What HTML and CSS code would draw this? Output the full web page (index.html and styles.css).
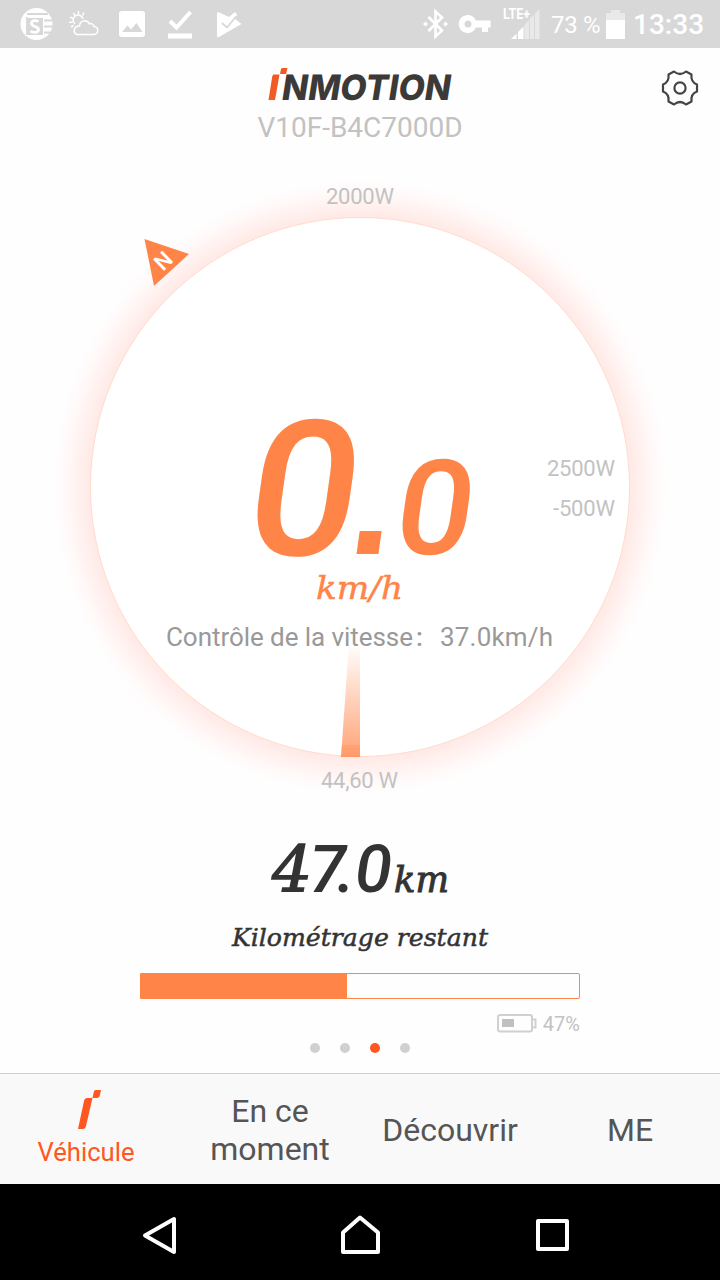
FILE: index.html
```
<!DOCTYPE html>
<html lang="fr">
<head>
  <meta charset="UTF-8" />
  <meta name="viewport" content="width=device-width, initial-scale=1.0">
  <title>InMotion – Véhicule</title>
  <link rel="stylesheet" href="styles.css">
</head>
<body>

  <!-- Status bar -->
  <div class="status-bar">
    <div class="status-icons">
      <svg width="34" height="34" viewBox="0 0 34 34">
        <circle cx="16.500" cy="17" r="16" fill="#fff" />
        <path d="M7 7H28M24 13.500H34M24 19.500H34M24 25.500H34M7 10V28" stroke="#d8d8d8" stroke-width="1.800" />
        <rect x="7" y="11" width="16" height="17" fill="#d8d8d8" />
        <path d="M18.500 14.500C16 13 11.500 13 11.500 16.500S18.500 19 18.500 22.500S13 26 10.500 24" fill="none" stroke="#fff" stroke-width="2.800" />
      </svg>
      <svg width="30" height="26" viewBox="0 0 30 26" fill="none" stroke="#fff" stroke-width="1.500">
        <path d="M8 23.500h16.500a4 4 0 0 0 .5-8c-.5-2.500-3-3.500-4.500-2.500c-2.500-5-9.500-4-10 2c-6 0-7 7-2.500 8.500z" />
        <path d="M6 13a5 5 0 1 1 8-5M9.500 0v3M4.500 2l1.500 3M1 6l3 1.500M0 11.500l3.500-.5M2 16l2.500-1.500M15 1.500l-1.500 3" />
      </svg>
      <svg width="26" height="26" viewBox="0 0 26 26">
        <rect width="26" height="26" rx="3" fill="#fff" />
        <path d="M3 21L8.500 14.500L12 18.500L17.500 12L23.500 21z" fill="#d8d8d8" />
      </svg>
      <svg width="25" height="29" viewBox="0 0 25 29">
        <path d="M2 11L8.500 17.500L22.500 2" fill="none" stroke="#fff" stroke-width="4" />
        <rect y="23.500" width="24" height="5" fill="#fff" />
      </svg>
      <svg width="25" height="27" viewBox="0 0 25 27">
        <path d="M1 1L12 6L18 1L20 3.500L18 8L24.500 13L1 26.500Q0 26 0 24V2z" fill="#fff" />
        <path d="M5 12L10 16.500L19 5.500" fill="none" stroke="#d8d8d8" stroke-width="1.800" />
      </svg>
    </div>
    <div class="status-info">
      <svg width="26" height="30" viewBox="0 0 26 30">
        <path d="M5.500 8L19 21.500L12.500 27.500V2.500L19 8.500L5.500 22" fill="none" stroke="#fff" stroke-width="2.600" />
        <path d="M2.500 12.500L5 15L2.500 17.500L0 15zM22.500 12.500L25 15L22.500 17.500L20 15z" fill="#fff" />
      </svg>
      <svg class="key" width="32" height="18" viewBox="0 0 32 18">
        <path d="M17 5.500H31.500V12.500H29V17H23V12.500H17A9 9 0 1 1 17 5.500zM9 5.500A3.500 3.500 0 1 0 9 12.500A3.500 3.500 0 1 0 9 5.500z" fill="#fff" fill-rule="evenodd" />
      </svg>
      <svg class="signal" width="37" height="32" viewBox="0 0 37 32">
        <path d="M20.500 17L25 12V31H20.500zM26 10.500L30 6.500V31H26zM31 5.500L35.500 1V31H31z" fill="#e9e9e9" />
        <path d="M7 31L12.500 25.500V31zM14 24L19.500 18.500V31H14z" fill="#fff" />
        <text x="-1" y="11" class="lte" textLength="27" lengthAdjust="spacingAndGlyphs">LTE+</text>
      </svg>
      <span class="percent">73 %</span>
      <svg class="battery" width="19" height="29" viewBox="0 0 19 29">
        <path d="M0 3H5V0H14V3H19V10H0z" fill="#e9e9e9" />
        <rect y="10" width="19" height="19" fill="#fff" />
      </svg>
      <span class="clock">13:33</span>
    </div>
  </div>

  <!-- Logo and vehicle name -->
  <header class="header">
    <svg class="logo" width="188" height="34" viewBox="0 0 188 34">
      <path d="M7.500 7.500H13.500L9 33H2.500L6 11Q6.500 7.500 7.500 7.500zM16 1H21.500L20 7H14L15 2z" fill="#f15a24" />
      <text transform="translate(14.500 33) skewX(-9)" class="logo-text" textLength="169" lengthAdjust="spacingAndGlyphs">NMOTION</text>
    </svg>
    <div class="vehicle-name">V10F-B4C7000D</div>
    <svg class="settings" width="40" height="40" viewBox="0 0 40 40" fill="none" stroke="#444" stroke-width="2.200">
      <path d="M14 3.500Q20 8.500 26 3.500L31.500 6.500Q30.500 14 37 16.500V23.500Q30.500 26 31.500 33.500L26 36.500Q20 31.500 14 36.500L8.500 33.500Q9.500 26 3 23.500V16.500Q9.500 14 8.500 6.500z" stroke-linejoin="round" />
      <circle cx="20" cy="20" r="5.600" />
    </svg>
  </header>

  <!-- Speed dial -->
  <svg class="dial" width="720" height="660" viewBox="0 150 720 660">
    <defs>
      <radialGradient id="glow" gradientUnits="userSpaceOnUse" cx="360" cy="487" r="308">
        <stop offset="0.875" stop-color="#ffe9e6" />
        <stop offset="0.920" stop-color="#fff2f0" />
        <stop offset="0.960" stop-color="#fffaf9" />
        <stop offset="1" stop-color="#fefefe" />
      </radialGradient>
      <linearGradient id="needle" x1="0" y1="0" x2="0" y2="1">
        <stop offset="0" stop-color="#ff8448" stop-opacity="0" />
        <stop offset="1" stop-color="#ff8448" stop-opacity="0.750" />
      </linearGradient>
    </defs>
    <circle cx="360" cy="487" r="308" fill="url(#glow)" />
    <circle cx="360" cy="487" r="269.500" fill="#fff" stroke="#ffd5c2" stroke-width="0.800" />
    <path d="M349 643H360V757H341z" fill="url(#needle)" />
    <path d="M342 745H360V757H341z" fill="#ff8448" fill-opacity="0.250" />

    <path d="M144.500 239L189 254L154 286z" fill="#ff8448" />
    <text class="north" transform="translate(163 260.500) rotate(-44)" y="8">N</text>

    <text class="watt" x="360" y="204" textLength="68">2000W</text>
    <text class="watt end" x="615" y="476" textLength="68">2500W</text>
    <text class="watt end" x="615" y="516" textLength="62">-500W</text>
    <text class="watt" x="359.500" y="788" textLength="77">44,60 W</text>

    <g class="speed">
      <text transform="translate(241 554.500) skewX(-8) scale(1.030 1)" font-size="189">0</text>
      <text class="point" transform="translate(346 554) skewX(-8)">.</text>
      <text transform="translate(391 554) skewX(-8) scale(1.030 1)" font-size="132">0</text>
    </g>
    <text class="slab unit" x="316" y="599" textLength="87" lengthAdjust="spacingAndGlyphs">km/h</text>
    <text class="limit" x="166" y="646" textLength="247">Contrôle de la vitesse</text>
    <text class="limit colon" x="416" y="646">:</text>
    <text class="limit" x="440" y="646" textLength="113">37.0km/h</text>
  </svg>

  <!-- Remaining range -->
  <div class="range">
    <svg width="260" height="140" viewBox="230 820 260 140">
      <text class="distance" y="892"><tspan class="four" x="272">4</tspan><tspan x="309 337 355">7.0</tspan></text>
      <text class="slab km" x="394" y="892" textLength="55" lengthAdjust="spacingAndGlyphs">km</text>
      <text class="slab caption" x="232" y="946" textLength="256" lengthAdjust="spacingAndGlyphs">Kilométrage restant</text>
    </svg>
    <div class="bar"><div class="bar-fill" style="width: 47%"></div></div>
    <div class="charge">
      <svg width="40" height="20" viewBox="0 0 40 20">
        <rect x="1" y="1" width="34" height="16.500" rx="2" fill="none" stroke="#d0d0d0" stroke-width="2" />
        <path d="M36 5.500H38.500V13.500H36" fill="none" stroke="#d0d0d0" stroke-width="2" />
        <rect x="5" y="5" width="12" height="8" fill="#c0c0c0" />
      </svg>
      <span>47%</span>
    </div>
    <div class="dots">
      <i></i><i></i><i class="active"></i><i></i>
    </div>
  </div>

  <!-- Tabs -->
  <nav class="tabs">
    <a class="tab tab-active">
      <svg width="24" height="41" viewBox="0 0 24 41">
        <path d="M9.500 9H14.500L8 37Q7.500 40 4.500 40H0L6 12Q6.500 9 9.500 9zM17.500 1H23L22 6Q21.500 9 18.500 9H14.500L15.500 4Q16 1 17.500 1z" fill="#ff5722" />
      </svg>
      <span>Véhicule</span>
    </a>
    <a class="tab">En ce<br>moment</a>
    <a class="tab">Découvrir</a>
    <a class="tab">ME</a>
  </nav>

  <!-- Android buttons -->
  <div class="nav-bar">
    <svg width="40" height="40" viewBox="0 0 40 40"><path d="M5 20.500L34 4V37z" /></svg>
    <svg width="40" height="40" viewBox="0 0 40 40"><path d="M3 17.500L20 2.500L38 17.500V37H3z" /></svg>
    <svg width="40" height="40" viewBox="0 0 40 40"><path d="M6 6H35V34H6z" /></svg>
  </div>

</body>
</html>
```
FILE: styles.css
```
body {
  font-family: Roboto, sans-serif;
  background: #fefefe;
  color: #333;
  margin: 0;
  width: 720px;
  height: 1280px;
  overflow: hidden;
}
svg {
  display: block;
  flex: none;
  overflow: visible;
}
.status-bar {
  display: flex;
  justify-content: space-between;
  height: 48px;
  background: #d8d8d8;
  color: #fff;
}
.status-icons {
  display: flex;
  align-items: center;
  gap: 21px;
  padding-left: 20px;
}
.status-icons svg:nth-child(2) {
  margin-left: -6px;
}
.status-icons svg:nth-child(3) {
  margin-left: -1px;
}
.status-icons svg:nth-child(4) {
  margin-left: 2px;
}
.status-icons svg:nth-child(5) {
  margin-left: 3px;
}
.status-info {
  display: flex;
  align-items: center;
  padding-right: 16px;
}
.key {
  margin-left: 10px;
}
.signal {
  margin: 0 10px 0 13px;
}
.lte {
  font-size: 14px;
  font-weight: bold;
  fill: #fff;
}
.percent {
  width: 55px;
  font-size: 24px;
  letter-spacing: -0.3px;
  padding-top: 1px;
  white-space: nowrap;
}
.clock {
  width: 71px;
  margin-left: 8px;
  padding-top: 1px;
  font-size: 28px;
  font-weight: 500;
}
.header {
  position: relative;
  height: 102px;
  text-align: center;
}
.logo {
  margin: 0 auto;
  padding-top: 19px;
}
.logo-text {
  font-family: Inter, sans-serif;
  font-size: 35px;
  font-weight: 800;
  fill: #3c3a38;
}
.vehicle-name {
  margin-top: 10px;
  font-size: 28px;
  line-height: 34px;
  color: #c2c2c2;
}
.settings {
  position: absolute;
  top: 20px;
  right: 20px;
}
.north {
  font-size: 22px;
  font-weight: 500;
  fill: #fff;
  text-anchor: middle;
}
.watt {
  font-size: 22px;
  fill: #c2c2c2;
  text-anchor: middle;
}
.watt.end {
  text-anchor: end;
}
.speed {
  font-weight: 500;
  fill: #ff8448;
}
.point {
  font-family: "Liberation Sans", sans-serif;
  font-size: 155px;
  font-weight: bold;
}
.slab {
  font-family: "DejaVu Serif", serif;
  font-style: italic;
  fill: #333;
  stroke: #333;
  stroke-width: 0.5px;
}
.unit {
  font-size: 32px;
  fill: #ff8448;
  stroke: #ff8448;
}
.limit {
  font-size: 26px;
  fill: #999;
}
.colon {
  font-weight: 500;
}
.distance {
  font-size: 67px;
  font-style: italic;
  font-weight: 500;
  fill: #333;
}
.four {
  font-family: "DejaVu Serif", serif;
  font-size: 63px;
  font-weight: normal;
  stroke: #333;
  stroke-width: 1.5px;
}
.km {
  font-size: 35px;
  stroke-width: 1px;
}
.caption {
  font-size: 25px;
}
.range {
  display: flex;
  flex-direction: column;
  align-items: center;
  height: 263px;
}
.range > svg {
  margin-top: 10px;
}
.bar {
  box-sizing: border-box;
  width: 440px;
  height: 26px;
  margin-top: 13px;
  border: 1px solid #ff8448;
  border-radius: 0 2px 2px 0;
}
.bar-fill {
  height: 100%;
  background: #ff8448;
}
.charge {
  display: flex;
  align-items: center;
  align-self: flex-end;
  gap: 6px;
  height: 22px;
  margin: 14px 140px 0 0;
  font-size: 20px;
  color: #c2c2c2;
}
.dots {
  display: flex;
  gap: 20px;
  margin-top: 8px;
}
.dots i {
  width: 10px;
  height: 10px;
  border-radius: 50%;
  background: #d0d0d0;
}
.dots .active {
  background: #ff5722;
}
.tabs {
  display: grid;
  grid-template-columns: repeat(4, 180px);
  box-sizing: border-box;
  height: 111px;
  border-top: 1px solid #d0d0d0;
  background: #f9f9f9;
}
.tab {
  display: flex;
  align-items: center;
  justify-content: center;
  padding-top: 2px;
  font-size: 32px;
  line-height: 38px;
  text-align: center;
  color: #555;
}
.tab-active {
  flex-direction: column;
  padding: 3px 8px 0 0;
  font-size: 25.6px;
  color: #ff5722;
}
.tab-active svg {
  margin: -1px 0 3px 8px;
}
.nav-bar {
  display: flex;
  gap: 152px;
  height: 96px;
  padding: 31px 0 0 140px;
  box-sizing: border-box;
  background: #000;
}
.nav-bar svg {
  fill: none;
  stroke: #fff;
  stroke-width: 4;
  stroke-linejoin: round;
}
.nav-bar svg:nth-child(2) {
  margin-left: 8px;
}
```
